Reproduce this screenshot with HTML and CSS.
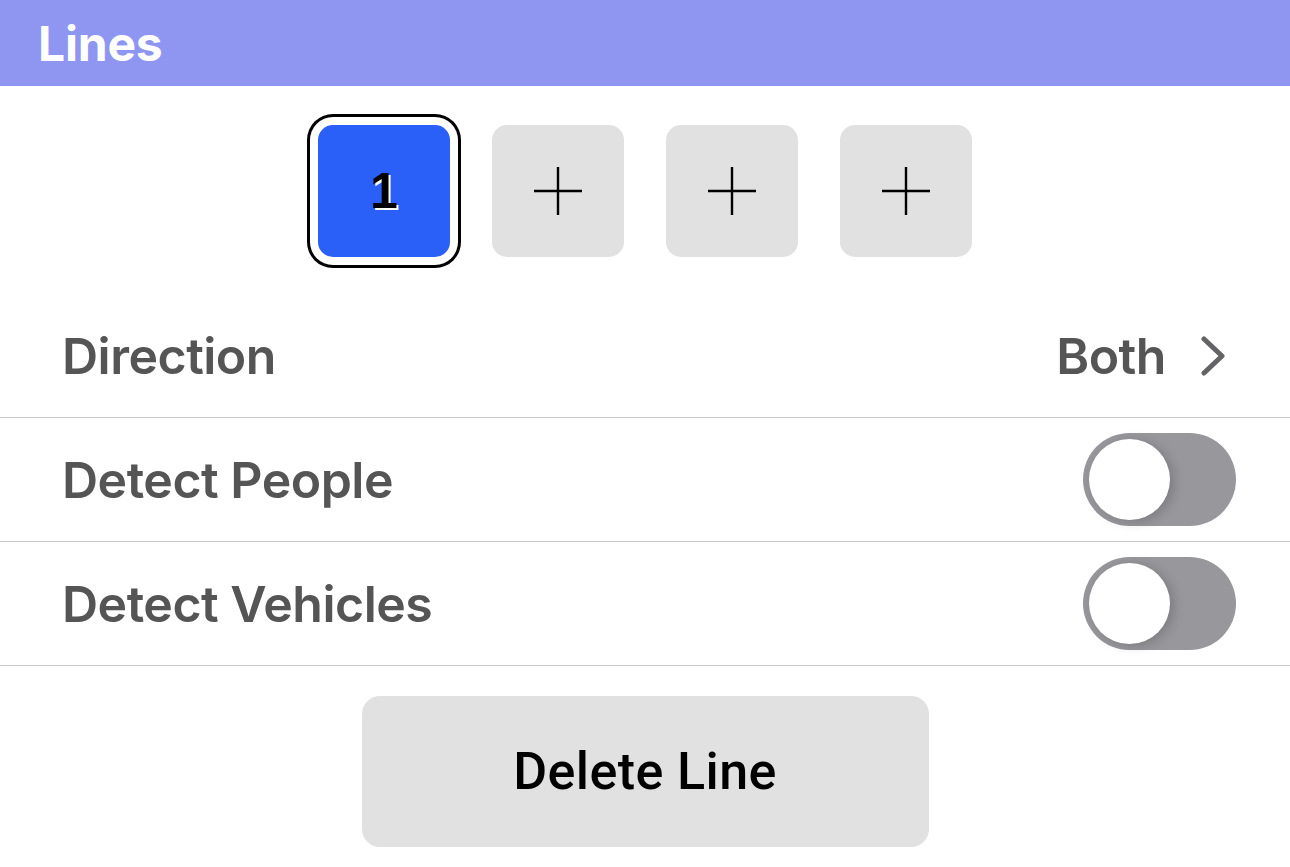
FILE: index.html
```html
<!DOCTYPE html>
<html>
<head>
<meta charset="utf-8">
<link rel="stylesheet" href="styles.css">
</head>
<body>
<header class="header"><h1 class="title">Lines</h1></header>
<div class="tabs">
  <div class="tab tab-selected"><span class="tab-num">1</span></div>
  <div class="tab"><svg class="plus" viewBox="0 0 48 48"><path d="M24 0V48M0 24H48" stroke="#000" stroke-width="2.4"/></svg></div>
  <div class="tab"><svg class="plus" viewBox="0 0 48 48"><path d="M24 0V48M0 24H48" stroke="#000" stroke-width="2.4"/></svg></div>
  <div class="tab"><svg class="plus" viewBox="0 0 48 48"><path d="M24 0V48M0 24H48" stroke="#000" stroke-width="2.4"/></svg></div>
</div>
<div class="list">
  <div class="row">
    <span class="label">Direction</span>
    <span class="value">Both<svg class="chevron" viewBox="0 0 26 40"><path d="M4 3L22 20L4 37" fill="none" stroke="#636366" stroke-width="5" stroke-linecap="round" stroke-linejoin="round"/></svg></span>
  </div>
  <div class="row">
    <span class="label">Detect People</span>
    <span class="switch"><span class="knob"></span></span>
  </div>
  <div class="row">
    <span class="label">Detect Vehicles</span>
    <span class="switch"><span class="knob"></span></span>
  </div>
</div>
<div class="actions"><button class="delete">Delete Line</button></div>
</body>
</html>
```
FILE: styles.css
```css
html, body {
  margin: 0;
  padding: 0;
  background: #fff;
  font-family: Inter, "Noto Sans", sans-serif;
}
.header {
  height: 86px;
  background: #8e96f2;
  display: flex;
  align-items: center;
  padding-left: 38px;
}
.title {
  margin: 0;
  color: #fff;
  font-size: 48px;
  font-weight: 700;
  letter-spacing: -0.2px;
}
.tabs {
  display: flex;
  justify-content: center;
  gap: 42px;
  padding-top: 39px;
}
.tab {
  width: 132px;
  height: 132px;
  border-radius: 15px;
  background: #e1e1e1;
  display: flex;
  align-items: center;
  justify-content: center;
}
.tab-selected {
  background: #2a5ff8;
  box-shadow: 0 0 0 8px #fff, 0 0 0 11px #000;
}
.tab-num {
  font-family: "Liberation Sans", Arial, sans-serif;
  font-size: 50px;
  font-weight: 700;
  color: #000;
  text-shadow: 2px 2px 0 #fff;
}
.plus {
  width: 48px;
  height: 48px;
}
.list {
  margin-top: 37px;
}
.row {
  height: 123px;
  border-bottom: 1px solid #c8c8c8;
  display: flex;
  align-items: center;
  justify-content: space-between;
  padding: 0 54px 0 62px;
}
.label, .value {
  font-size: 50px;
  font-weight: 560;
  color: #555;
  letter-spacing: -0.5px;
}
.value {
  display: flex;
  align-items: center;
  gap: 34px;
  margin-right: 10px;
}
.chevron {
  width: 26px;
  height: 40px;
}
.switch {
  width: 153px;
  height: 93px;
  border-radius: 47px;
  background: #97979c;
  display: flex;
  align-items: center;
  padding-left: 6px;
  box-sizing: border-box;
}
.knob {
  width: 81px;
  height: 81px;
  border-radius: 50%;
  background: #fff;
  box-shadow: 4px 2px 12px rgba(0,0,0,0.18);
}
.actions {
  display: flex;
  justify-content: center;
  padding-top: 30px;
}
.delete {
  width: 567px;
  height: 151px;
  border: none;
  border-radius: 18px;
  background: #e1e1e1;
  font-family: Roboto, "Noto Sans", sans-serif;
  font-size: 52px;
  font-weight: 500;
  color: #000;
  letter-spacing: 0.4px;
}
```
